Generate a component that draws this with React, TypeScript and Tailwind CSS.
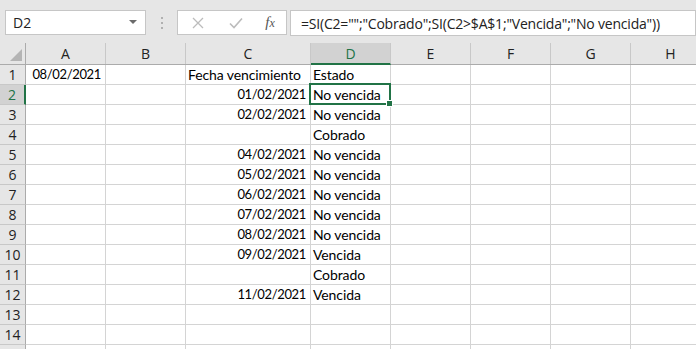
import React from "react";

const cols = [
  { k: "A", w: 80 },
  { k: "B", w: 80 },
  { k: "C", w: 125 },
  { k: "D", w: 80 },
  { k: "E", w: 80 },
  { k: "F", w: 80 },
  { k: "G", w: 80 },
  { k: "H", w: 80 },
];

type Row = { A?: string; C?: string; D?: string; cHead?: boolean };
const rows: Row[] = [
  { A: "08/02/2021", C: "Fecha vencimiento", D: "Estado", cHead: true },
  { C: "01/02/2021", D: "No vencida" },
  { C: "02/02/2021", D: "No vencida" },
  { D: "Cobrado" },
  { C: "04/02/2021", D: "No vencida" },
  { C: "05/02/2021", D: "No vencida" },
  { C: "06/02/2021", D: "No vencida" },
  { C: "07/02/2021", D: "No vencida" },
  { C: "08/02/2021", D: "No vencida" },
  { C: "09/02/2021", D: "Vencida" },
  { D: "Cobrado" },
  { C: "11/02/2021", D: "Vencida" },
  {},
  {},
  {},
];

const cellFont = { fontFamily: "Lato, 'Liberation Sans', sans-serif" };
const uiFont = { fontFamily: "'Open Sans', 'Noto Sans', sans-serif" };

export default function App() {
  return (
    <div className="w-[696px] h-[349px] overflow-hidden bg-white relative">
      {/* toolbar */}
      <div className="h-[43px] bg-[#e6e6e6] flex items-start pt-[10px] pl-[5px] gap-0">
        <div className="w-[141px] h-[25px] bg-white border border-[#c6c6c6] flex items-center justify-between pl-[7px] pr-[8px]">
          <span className="text-[14px] text-[#222]" style={uiFont}>D2</span>
          <svg width="8" height="5" viewBox="0 0 8 5"><path d="M0 0h8L4 4z" fill="#6b6b6b" /></svg>
        </div>
        <div className="w-[31px] h-[25px] flex flex-col items-center justify-center gap-[3px]">
          <span className="w-[2px] h-[2px] bg-[#b0b0b0]" />
          <span className="w-[2px] h-[2px] bg-[#b0b0b0]" />
          <span className="w-[2px] h-[2px] bg-[#b0b0b0]" />
        </div>
        <div className="w-[110px] h-[25px] bg-white border border-[#c6c6c6] flex items-center">
          <div className="w-[40px] flex justify-center">
            <svg width="12" height="12" viewBox="0 0 12 12"><path d="M1 1L11 11M11 1L1 11" stroke="#bcbcbc" strokeWidth="1.3" /></svg>
          </div>
          <div className="w-[36px] flex justify-center">
            <svg width="14" height="12" viewBox="0 0 14 12"><path d="M1 6.5L5 10.5L13 1.5" stroke="#bcbcbc" strokeWidth="1.6" fill="none" /></svg>
          </div>
          <div className="w-[32px] flex justify-center">
            <span className="italic text-[15px] text-[#555] leading-none" style={{ fontFamily: "'Liberation Serif', serif" }}>f<span className="text-[12px]">x</span></span>
          </div>
        </div>
        <div className="ml-[3px] w-[406px] h-[26px] bg-white border border-[#c6c6c6] flex items-center pl-[10px]">
          <span className="text-[14px] tracking-[-0.2px] text-[#222] whitespace-nowrap" style={uiFont}>=SI(C2="";"Cobrado";SI(C2&gt;$A$1;"Vencida";"No vencida"))</span>
        </div>
      </div>

      {/* column headers */}
      <div className="flex h-[22px] bg-[#e6e6e6] border-b border-[#ababab]">
        <div className="w-[26px] shrink-0 border-r border-[#ababab] relative">
          <svg className="absolute left-[10px] top-[6px]" width="12" height="12" viewBox="0 0 12 12"><path d="M12 0V12H0z" fill="#b4b4b4" /></svg>
        </div>
        {cols.map((c) => {
          const sel = c.k === "D";
          return (
            <div
              key={c.k}
              style={{ width: c.w, ...uiFont }}
              className={
                "shrink-0 flex items-center justify-center text-[14px] border-r border-[#c8c8c8] " +
                (sel ? "bg-[#d2d2d2] text-[#217346] border-b-2 border-b-[#217346] -mb-px" : "text-[#222]")
              }
            >
              {c.k}
            </div>
          );
        })}
      </div>

      {/* rows */}
      {rows.map((r, i) => {
        const n = i + 1;
        const selRow = n === 2;
        return (
          <div key={i} className="flex h-[20px]">
            <div
              style={uiFont}
              className={
                "w-[26px] shrink-0 flex items-center justify-center text-[14px] border-b border-[#c8c8c8] " +
                (selRow
                  ? "bg-[#d2d2d2] text-[#217346] border-r-2 border-r-[#217346]"
                  : "bg-[#e6e6e6] text-[#222] border-r border-r-[#ababab]")
              }
            >
              {n <= 14 ? n : ""}
            </div>
            {cols.map((c) => {
              const v = (r as any)[c.k] as string | undefined;
              const isDate = c.k === "A" || (c.k === "C" && !r.cHead);
              const isSel = selRow && c.k === "D";
              return (
                <div
                  key={c.k}
                  style={{ width: c.w, ...cellFont }}
                  className={
                    "shrink-0 relative border-r border-b border-[#d4d4d4] flex items-center text-black whitespace-nowrap " +
                    (isSel ? "z-10 " : "") +
                    (isDate
                      ? "justify-end pr-[4px] text-[13px] tracking-[-0.35px]"
                      : "justify-start pl-[2px] text-[14px] tracking-[-0.1px]")
                  }
                >
                  {v}
                  {isSel && (
                    <div className="absolute left-[-2px] top-[-2px] w-[82px] h-[22px] border-2 border-[#217346]">
                      <div className="absolute right-[-4px] bottom-[-4px] w-[7px] h-[7px] bg-[#217346] border border-white" />
                    </div>
                  )}
                </div>
              );
            })}
          </div>
        );
      })}
    </div>
  );
}
